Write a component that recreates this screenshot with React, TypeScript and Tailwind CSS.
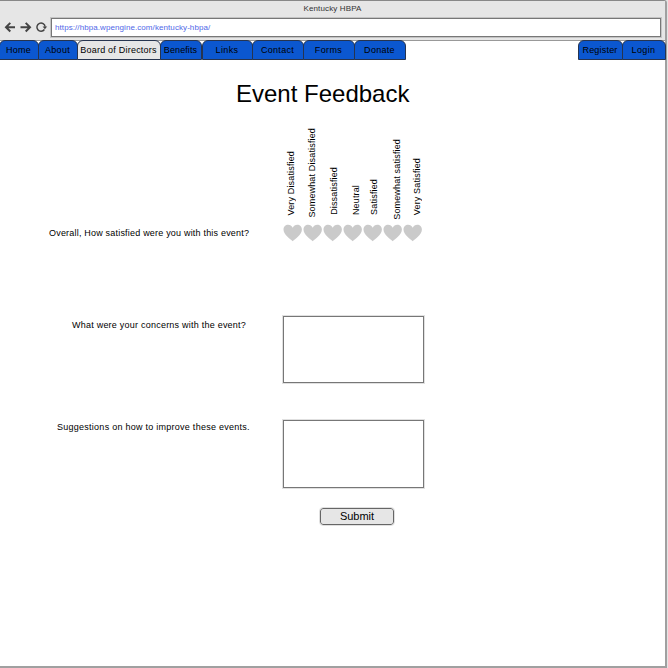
type Tab = { label: string; width: string; text: string; active?: boolean };

const mainTabs: Tab[] = [
  { label: 'Home', width: 'w-[40px] -ml-px', text: 'tracking-[0.3px]' },
  { label: 'About', width: 'w-[40px] -ml-px', text: 'tracking-[0.3px]' },
  { label: 'Board of Directors', width: 'w-[84px] -ml-px', text: 'tracking-[0.22px]', active: true },
  { label: 'Benefits', width: 'w-[42px] -ml-px', text: 'tracking-[0.1px]' },
  { label: 'Links', width: 'w-[51px]', text: 'tracking-[0.4px]' },
  { label: 'Contact', width: 'w-[52px] -ml-px', text: 'tracking-[0.3px]' },
  { label: 'Forms', width: 'w-[52px] -ml-px', text: 'tracking-[0.4px]' },
  { label: 'Donate', width: 'w-[52px] -ml-px', text: 'tracking-[0.3px]' },
];

const accountTabs: Tab[] = [
  { label: 'Register', width: 'w-[45px]', text: 'tracking-[0.2px]' },
  { label: 'Login', width: 'w-[44px] -ml-px', text: 'tracking-[0.4px]' },
];

const ratings = [
  { label: 'Very Disatisfied', box: 'w-[21px] pb-[5px]' },
  { label: 'Somewhat Disatisfied', box: 'w-[21px] pb-[2px]' },
  { label: 'Dissatisfied', box: 'w-[23px] pb-[5px]' },
  { label: 'Neutral', box: 'w-[21px] pb-[5px]' },
  { label: 'Satisfied', box: 'w-[15px] pb-[5px]' },
  { label: 'Somewhat satisfied', box: 'w-[31px]' },
  { label: 'Very Satisfied', box: 'w-[9px] pb-[5px]' },
];

function NavTab({ label, width, text, active }: Tab) {
  return (
    <button
      className={`flex h-5 shrink-0 items-center justify-center whitespace-nowrap rounded-t-[6px] border border-[#26344f] pr-px text-[9px] leading-none ${width} ${text} ${active ? 'bg-[#e6e6e6]' : 'bg-[#0b57d0]'}`}
    >
      {label}
    </button>
  );
}

function BrowserIcons() {
  return (
    <svg width="51" height="19" viewBox="0 0 51 19" fill="none" stroke="#444" className="shrink-0">
      <path d="M15 9.200H6M10.300 4.900 6 9.200l4.300 4.300" strokeWidth="2" />
      <path d="M20.500 9.200h9M25.700 4.900 30 9.200l-4.300 4.300" strokeWidth="2" />
      <path d="M44.400 11.500A4.100 4.100 0 1 1 45.100 8.800" strokeWidth="1.5" />
      <path d="M42.600 8.500h4.600l-2.300 2.800z" fill="#444" stroke="none" />
    </svg>
  );
}

function Heart() {
  return (
    <svg width="20" height="18" viewBox="0 0 20 18" fill="#cacaca">
      <path d="M9.700 17.200C7.500 15 .5 11.200.5 5.600.5 2.800 2.600.800 5.100.800c2 0 3.700 1.100 4.600 2.900.9-1.800 2.600-2.900 4.600-2.900 2.500 0 4.600 2 4.600 4.800 0 5.600-7 9.400-9.200 11.600Z" />
    </svg>
  );
}

export default function App() {
  return (
    <div className="h-[668px] w-[668px] overflow-hidden bg-[#e4e4e4] font-['Liberation_Sans',Arial,sans-serif] text-black">
      <div className="flex h-[668px] w-[667px] flex-col rounded-tr-[3px] border-t border-r-2 border-b-2 border-t-[#888] border-r-[#a0a0a0] border-b-[#a0a0a0] bg-white">
        <header className="h-10 shrink-0 bg-[#e6e6e6]">
          <div className="h-[17px] pt-[3px] text-center text-[8px] leading-[9px] tracking-[0.14px] text-[#333]">Kentucky HBPA</div>
          <div className="flex h-[19px] items-center pr-1">
            <BrowserIcons />
            <div className="flex h-[19px] flex-1 items-center border border-[#777] bg-white pl-[3px] text-[8px] tracking-[0.08px] text-[#5068e8] outline outline-[#c4c4c4]">
              https://hbpa.wpengine.com/kentucky-hbpa/
            </div>
          </div>
        </header>
        <nav className="-mt-px flex h-5 shrink-0 justify-between border-t border-[#999]">
          <div className="-mt-px flex">{mainTabs.map((tab) => <NavTab key={tab.label} {...tab} />)}</div>
          <div className="-mt-px -mr-px flex">{accountTabs.map((tab) => <NavTab key={tab.label} {...tab} />)}</div>
        </nav>
        <main className="flex flex-col text-[9px] leading-[11px]">
          <h1 className="mt-[19px] ml-[236px] text-[24px] leading-[30px]">Event Feedback</h1>
          <div className="mt-[11px] ml-[281px] flex h-[100px] items-end">
            {ratings.map(({ label, box }) => (
              <div key={label} className={`flex shrink-0 justify-center ${box}`}>
                <span className="rotate-180 whitespace-nowrap tracking-[0.15px] [writing-mode:vertical-rl]">{label}</span>
              </div>
            ))}
          </div>
          <div className="mt-[4px] flex h-[18px] items-center">
            <div className="w-[283px] pl-[49px] tracking-[0.2px] whitespace-nowrap">Overall, How satisfied were you with this event?</div>
            <div className="flex">{ratings.map(({ label }) => <Heart key={label} />)}</div>
          </div>
          <div className="mt-[74px] flex">
            <label htmlFor="concerns" className="w-[283px] pt-[4px] pl-[72px] tracking-[0.23px]">What were your concerns with the event?</label>
            <textarea id="concerns" className="h-[67px] w-[141px] resize-none border border-[#777] bg-white outline outline-[#e0e0e0]" />
          </div>
          <div className="mt-[37px] flex">
            <label htmlFor="suggestions" className="w-[283px] pt-[2px] pl-[57px] tracking-[0.26px]">Suggestions on how to improve these events.</label>
            <textarea id="suggestions" className="h-[68px] w-[141px] resize-none border border-[#777] bg-white outline outline-[#e0e0e0]" />
          </div>
          <button className="mt-[20px] ml-[320px] h-[17px] w-[74px] rounded-[3px] border border-[#666] bg-[#e6e6e6] text-[11px] leading-none outline outline-[#e0e0e0]">Submit</button>
        </main>
      </div>
    </div>
  );
}
